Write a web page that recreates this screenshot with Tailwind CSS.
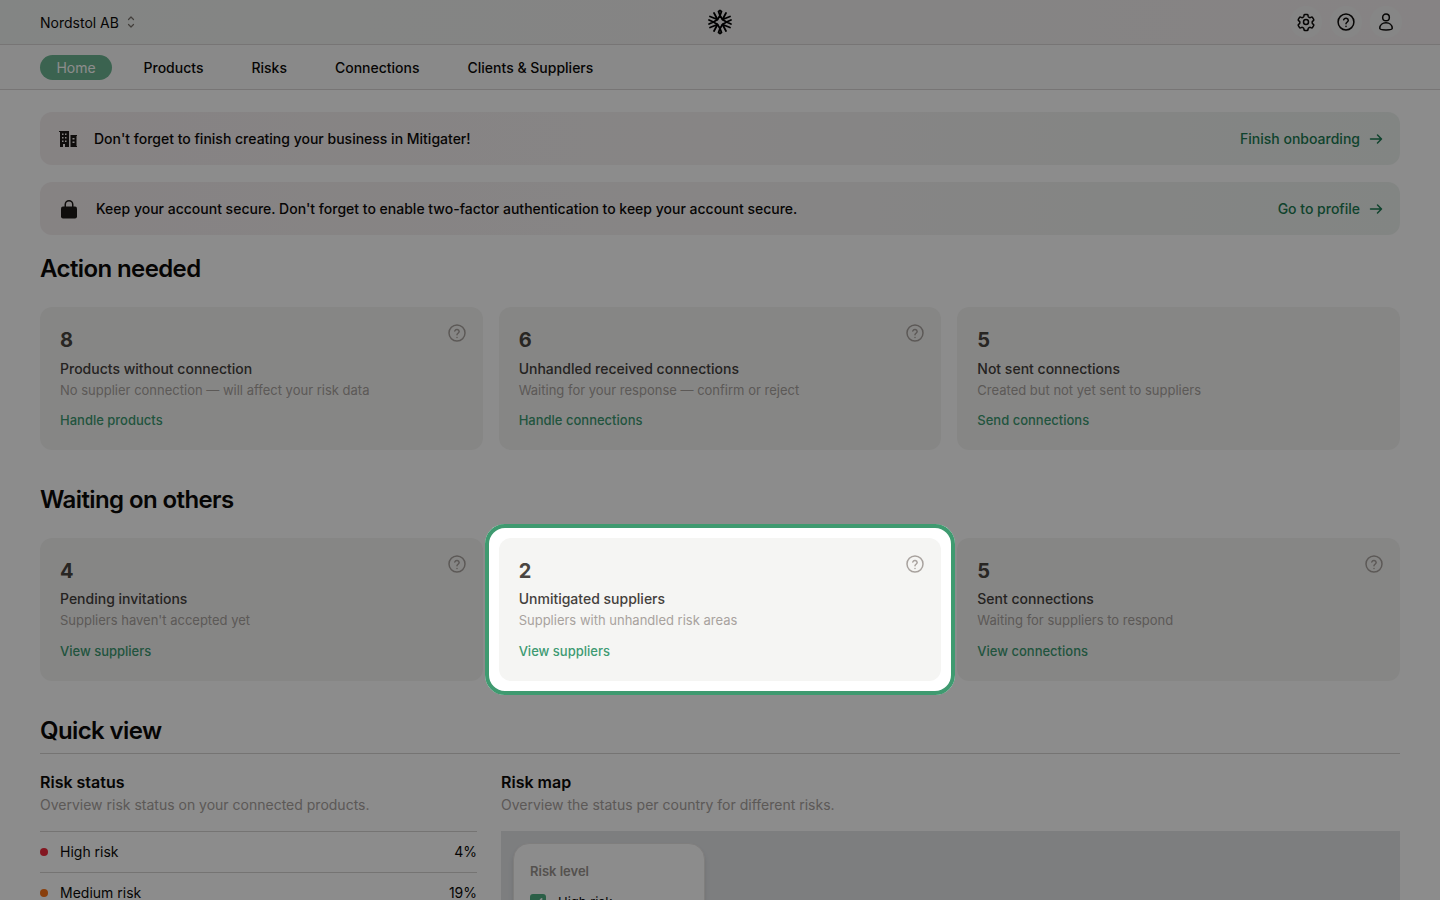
<!DOCTYPE html>
<html lang="en">
  <head>
    <meta charset="UTF-8" />
    <meta name="viewport" content="width=device-width, initial-scale=1.0" />
    <title>Mitigater - Home</title>
    <script src="https://cdn.jsdelivr.net/npm/@tailwindcss/browser@4"></script>
  </head>
  <body class="bg-white h-screen overflow-hidden font-['Inter',sans-serif] text-[#0c0a09]">
    <!-- header -->
    <header class="h-[45px] pl-10 pr-[38px] flex items-center border-b border-[#d9d6d6] bg-linear-to-r from-[#eff3f0] to-[#f5eff1]">
      <div class="flex-1">
        <button class="flex items-center gap-[6px] text-sm">
          <span class="pt-[2px]">Nordstol AB</span>
          <svg class="w-[12px] h-[16px] text-[#78716c]" viewBox="0 0 12 16" fill="none" stroke="currentColor" stroke-width="1.2" stroke-linecap="round" stroke-linejoin="round"><path d="M3.5 5.5 6 3l2.5 2.5M3.5 10.5 6 13l2.5-2.5" /></svg>
        </button>
      </div>
      <svg class="w-[26px] h-[26px] -ml-[2px]" viewBox="0 0 26 26" fill="none" stroke="#000" stroke-width="1.800" stroke-linejoin="round" stroke-linecap="round">
        <path d="M13 6.500 15.500 10.500 19.500 13 15.500 15.500 13 19.500 10.500 15.500 6.500 13 10.500 10.500Z" />
        <path d="M13 6.500 11.500 2.500 13 1.500 14.500 2.500ZM13 19.500 11.500 23.500 13 24.500 14.500 23.500Z" />
        <path d="M15.500 10.500 19 4M15.500 10.500 23 7.500M19.500 13 24 11M19.500 13 24 15M15.500 15.500 23 18.500M15.500 15.500 19 22M10.500 15.500 7 22M10.500 15.500 3 18.500M6.500 13 2 15M6.500 13 2 11M10.500 10.500 3 7.500M10.500 10.500 7 4" />
      </svg>
      <div class="flex-1 flex items-center justify-end gap-2">
        <span class="w-8 h-8 rounded-full bg-[#f5f5f4] flex items-center justify-center">
          <svg class="w-5 h-5" viewBox="0 0 24 24" fill="none" stroke="#0c0a09" stroke-width="1.8" stroke-linecap="round" stroke-linejoin="round"><path d="M9.6 3.9c.1-.5.5-.9 1.100-.9h2.600c.6 0 1 .4 1.100.9l.2 1.400c.1.400.3.700.7.900l.8.400c.3.200.7.200 1.100.100l1.300-.5c.5-.2 1.100 0 1.400.5l1.300 2.200c.3.500.2 1.100-.3 1.400l-1.100.9c-.3.300-.4.600-.4 1v.800c0 .400.100.700.400 1l1.100.9c.5.300.6.900.3 1.400l-1.300 2.200c-.3.500-.9.700-1.400.5l-1.300-.5c-.4-.1-.8-.1-1.100.100l-.8.400c-.4.200-.6.500-.7.900l-.2 1.400c-.1.500-.5.900-1.100.9h-2.600c-.6 0-1-.4-1.100-.9l-.2-1.400c-.1-.4-.3-.7-.7-.9l-.8-.4c-.3-.2-.7-.2-1.100-.1l-1.300.5c-.5.200-1.100 0-1.400-.5l-1.300-2.200c-.3-.5-.2-1.100.3-1.400l1.100-.9c.3-.3.400-.6.400-1v-.8c0-.4-.1-.7-.4-1l-1.100-.9c-.5-.3-.6-.9-.3-1.400l1.300-2.200c.3-.5.900-.7 1.400-.5l1.300.5c.4.100.8.100 1.100-.1l.8-.4c.4-.2.600-.5.700-.9z" /><circle cx="12" cy="12" r="3" /></svg>
        </span>
        <span class="w-8 h-8 rounded-full bg-[#f5f5f4] flex items-center justify-center">
          <svg class="w-5 h-5" viewBox="0 0 24 24" fill="none" stroke="#0c0a09" stroke-width="1.8" stroke-linecap="round" stroke-linejoin="round"><circle cx="12" cy="12" r="9.500" /><path d="M9.200 9.300a2.900 2.900 0 0 1 5.600.7c0 2-2.800 2.500-2.800 4" /><path d="M12 17.200v.1" /></svg>
        </span>
        <span class="w-8 h-8 rounded-full bg-[#f5f5f4] flex items-center justify-center">
          <svg class="w-5 h-5" viewBox="0 0 24 24" fill="none" stroke="#0c0a09" stroke-width="1.8" stroke-linecap="round" stroke-linejoin="round"><circle cx="12" cy="6.500" r="4" /><path d="M4.500 19.500c0-4 3.500-6.500 7.500-6.500s7.500 2.500 7.500 6.500c0 1.300-3.500 2-7.500 2s-7.500-.7-7.500-2z" /></svg>
        </span>
      </div>
    </header>

    <!-- nav -->
    <nav class="h-[45px] px-10 flex items-center gap-12 text-sm font-medium border-b border-[#d9d6d6] bg-[#fafaf9]">
      <a class="-mr-[16.5px] h-[25px] w-[72px] pt-[2px] rounded-full bg-[#6cb592] text-white flex items-center justify-center font-normal">Home</a>
      <a class="pt-[2px]">Products</a>
      <a class="pt-[2px]">Risks</a>
      <a class="pt-[2px]">Connections</a>
      <a class="pt-[2px]">Clients &amp; Suppliers</a>
    </nav>

    <main class="px-10 pt-[22px]">
      <!-- banners -->
      <div class="flex flex-col gap-[17px]">
        <div class="h-[53px] pl-[19px] pr-4 rounded-xl flex items-center justify-between bg-linear-to-r from-[#f5eeef] via-[#f6f3f3] to-[#edf3ef]">
          <div class="flex items-center gap-[17px] text-sm font-medium">
            <svg class="w-[18px] h-[18px]" viewBox="0 0 18 18" fill="#1c1917"><path fill-rule="evenodd" d="M0 1h10v16H6v-3H4v3H0V17h1V2H0zM3 3.500h1.500V5H3zM6 3.500h1.500V5H6zM3 7h1.500v1.500H3zM6 7h1.500v1.500H6zM3 10.500h1.500V12H3zM6 10.500h1.500V12H6z" /><path fill-rule="evenodd" d="M11.500 5H18v1h-.500v10H18v1h-6.500zM13.500 8h2v1.500h-2zM13.500 11.500h2V13h-2z" /></svg>
            <span>Don't forget to finish creating your business in Mitigater!</span>
          </div>
          <a class="flex items-center gap-2 text-sm font-medium text-[#1c7a52]">
            Finish onboarding
            <svg class="w-4 h-4" viewBox="0 0 16 16" fill="none" stroke="currentColor" stroke-width="1.500" stroke-linecap="round" stroke-linejoin="round"><path d="M2.500 8h11M9.500 4l4 4-4 4" /></svg>
          </a>
        </div>
        <div class="h-[53px] pl-[20px] pr-4 rounded-xl flex items-center justify-between bg-linear-to-r from-[#f5eeef] via-[#f6f3f3] to-[#edf3ef]">
          <div class="flex items-center gap-[18px] text-sm font-medium">
            <svg class="w-[18px] h-[20px]" viewBox="0 0 18 20" fill="#1c1917"><path d="M4.500 8V5.500a4.500 4.500 0 0 1 9 0V8h-1.500V5.500a3 3 0 0 0-6 0V8z" /><rect x="1" y="7.500" width="16" height="12" rx="2" /></svg>
            <span>Keep your account secure. Don't forget to enable two-factor authentication to keep your account secure.</span>
          </div>
          <a class="flex items-center gap-2 text-sm font-medium text-[#1c7a52]">
            Go to profile
            <svg class="w-4 h-4" viewBox="0 0 16 16" fill="none" stroke="currentColor" stroke-width="1.500" stroke-linecap="round" stroke-linejoin="round"><path d="M2.500 8h11M9.500 4l4 4-4 4" /></svg>
          </a>
        </div>
      </div>

      <!-- action needed -->
      <h2 class="mt-[18px] text-2xl font-semibold leading-8 tracking-tight">Action needed</h2>
      <div class="mt-[22px] grid grid-cols-3 gap-4">
        <div class="relative h-[143px] rounded-xl bg-[#f5f5f3] px-5 pt-[19px]">
          <svg class="absolute top-[16px] right-[16px] w-5 h-5" viewBox="0 0 20 20" fill="none" stroke="#a8a29e" stroke-width="1.500" stroke-linecap="round"><circle cx="10" cy="10" r="8" /><path d="M7.800 8a2.300 2.300 0 0 1 4.400.6c0 1.500-2.200 1.800-2.200 3.200M10 14.500v.1" /></svg>
          <p class="text-xl font-bold leading-7 text-[#4a4541]">8</p>
          <p class="mt-[5px] text-sm font-medium leading-5 text-[#44403c]">Products without connection</p>
          <p class="mt-[1px] text-[13px] leading-5 text-[#a8a29e]">No supplier connection — will affect your risk data</p>
          <a class="block mt-[10px] text-[13px] font-medium leading-5 text-[#3d9a72]">Handle products</a>
        </div>
        <div class="relative h-[143px] rounded-xl bg-[#f5f5f3] px-5 pt-[19px]">
          <svg class="absolute top-[16px] right-[16px] w-5 h-5" viewBox="0 0 20 20" fill="none" stroke="#a8a29e" stroke-width="1.500" stroke-linecap="round"><circle cx="10" cy="10" r="8" /><path d="M7.800 8a2.300 2.300 0 0 1 4.400.6c0 1.500-2.200 1.800-2.200 3.200M10 14.500v.1" /></svg>
          <p class="text-xl font-bold leading-7 text-[#4a4541]">6</p>
          <p class="mt-[5px] text-sm font-medium leading-5 text-[#44403c]">Unhandled received connections</p>
          <p class="mt-[1px] text-[13px] leading-5 text-[#a8a29e]">Waiting for your response — confirm or reject</p>
          <a class="block mt-[10px] text-[13px] font-medium leading-5 text-[#3d9a72]">Handle connections</a>
        </div>
        <div class="relative h-[143px] rounded-xl bg-[#f5f5f3] px-5 pt-[19px]">
          <p class="text-xl font-bold leading-7 text-[#4a4541]">5</p>
          <p class="mt-[5px] text-sm font-medium leading-5 text-[#44403c]">Not sent connections</p>
          <p class="mt-[1px] text-[13px] leading-5 text-[#a8a29e]">Created but not yet sent to suppliers</p>
          <a class="block mt-[10px] text-[13px] font-medium leading-5 text-[#3d9a72]">Send connections</a>
        </div>
      </div>

      <!-- waiting on others -->
      <h2 class="mt-[34px] text-2xl font-semibold leading-8 tracking-tight">Waiting on others</h2>
      <div class="mt-[22px] grid grid-cols-3 gap-4">
        <div class="relative h-[143px] rounded-xl bg-[#f5f5f3] px-5 pt-[19px]">
          <svg class="absolute top-[16px] right-[16px] w-5 h-5" viewBox="0 0 20 20" fill="none" stroke="#a8a29e" stroke-width="1.500" stroke-linecap="round"><circle cx="10" cy="10" r="8" /><path d="M7.800 8a2.300 2.300 0 0 1 4.400.6c0 1.500-2.200 1.800-2.200 3.200M10 14.500v.1" /></svg>
          <p class="text-xl font-bold leading-7 text-[#4a4541]">4</p>
          <p class="mt-[4px] text-sm font-medium leading-5 text-[#44403c]">Pending invitations</p>
          <p class="mt-[1px] text-[13px] leading-5 text-[#a8a29e]">Suppliers haven't accepted yet</p>
          <a class="block mt-[11px] text-[13px] font-medium leading-5 text-[#3d9a72]">View suppliers</a>
        </div>
        <div class="relative h-[143px] rounded-xl bg-[#f5f5f3] px-5 pt-[19px]">
          <svg class="absolute top-[16px] right-[16px] w-5 h-5" viewBox="0 0 20 20" fill="none" stroke="#a8a29e" stroke-width="1.500" stroke-linecap="round"><circle cx="10" cy="10" r="8" /><path d="M7.800 8a2.300 2.300 0 0 1 4.400.6c0 1.500-2.200 1.800-2.200 3.200M10 14.500v.1" /></svg>
          <p class="text-xl font-bold leading-7 text-[#4a4541]">2</p>
          <p class="mt-[4px] text-sm font-medium leading-5 text-[#44403c]">Unmitigated suppliers</p>
          <p class="mt-[1px] text-[13px] leading-5 text-[#a8a29e]">Suppliers with unhandled risk areas</p>
          <a class="block mt-[11px] text-[13px] font-medium leading-5 text-[#3d9a72]">View suppliers</a>
          <!-- tour spotlight: the huge shadow dims the rest of the page -->
          <div class="absolute z-10 -inset-x-[14px] -inset-y-[14px] rounded-[20px] border-4 border-[#3f9a70] shadow-[0_0_0_2000px_rgba(0,0,0,0.45)] pointer-events-none"></div>
        </div>
        <div class="relative h-[143px] rounded-xl bg-[#f5f5f3] px-5 pt-[19px]">
          <svg class="absolute top-[16px] right-[16px] w-5 h-5" viewBox="0 0 20 20" fill="none" stroke="#a8a29e" stroke-width="1.500" stroke-linecap="round"><circle cx="10" cy="10" r="8" /><path d="M7.800 8a2.300 2.300 0 0 1 4.400.6c0 1.500-2.200 1.800-2.200 3.200M10 14.500v.1" /></svg>
          <p class="text-xl font-bold leading-7 text-[#4a4541]">5</p>
          <p class="mt-[4px] text-sm font-medium leading-5 text-[#44403c]">Sent connections</p>
          <p class="mt-[1px] text-[13px] leading-5 text-[#a8a29e]">Waiting for suppliers to respond</p>
          <a class="block mt-[11px] text-[13px] font-medium leading-5 text-[#3d9a72]">View connections</a>
        </div>
      </div>

      <!-- quick view -->
      <h2 class="mt-[34px] text-2xl font-semibold leading-8 tracking-tight pb-[6px] border-b border-[#d6d3d1]">Quick view</h2>
      <div class="mt-[18px] grid grid-cols-[437px_1fr] gap-6">
        <section>
          <h3 class="text-base font-semibold leading-5">Risk status</h3>
          <p class="mt-[3px] text-sm leading-5 text-[#a8a29e]">Overview risk status on your connected products.</p>
          <div class="mt-4 border-t border-[#d6d3d1] h-[41px] flex items-center justify-between text-sm">
            <span class="flex items-center gap-3"><i class="w-2 h-2 rounded-full bg-[#ef2b3c]"></i>High risk</span>
            <span>4%</span>
          </div>
          <div class="border-t border-[#d6d3d1] h-[41px] flex items-center justify-between text-sm">
            <span class="flex items-center gap-3"><i class="w-2 h-2 rounded-full bg-[#f97316]"></i>Medium risk</span>
            <span>19%</span>
          </div>
        </section>
        <section>
          <h3 class="text-base font-semibold leading-5">Risk map</h3>
          <p class="mt-[3px] text-sm leading-5 text-[#a8a29e]">Overview the status per country for different risks.</p>
          <div class="mt-4 h-[300px] bg-[#e3e5e8] p-3">
            <div class="w-[192px] rounded-2xl bg-white border border-[#e7e5e4] shadow-md px-4 pt-[17px] pb-5">
              <p class="text-[13px] font-semibold leading-5 text-[#9a948f]">Risk level</p>
              <label class="mt-[11px] flex items-center gap-3 text-[13px] leading-5">
                <span class="w-4 h-4 rounded-[3px] bg-[#4fae82] flex items-center justify-center">
                  <svg class="w-3 h-3" viewBox="0 0 12 12" fill="none" stroke="#fff" stroke-width="2" stroke-linecap="round" stroke-linejoin="round"><path d="M2.500 6.500 5 9l4.500-6" /></svg>
                </span>
                High risk
              </label>
            </div>
          </div>
        </section>
      </div>
    </main>
  </body>
</html>
